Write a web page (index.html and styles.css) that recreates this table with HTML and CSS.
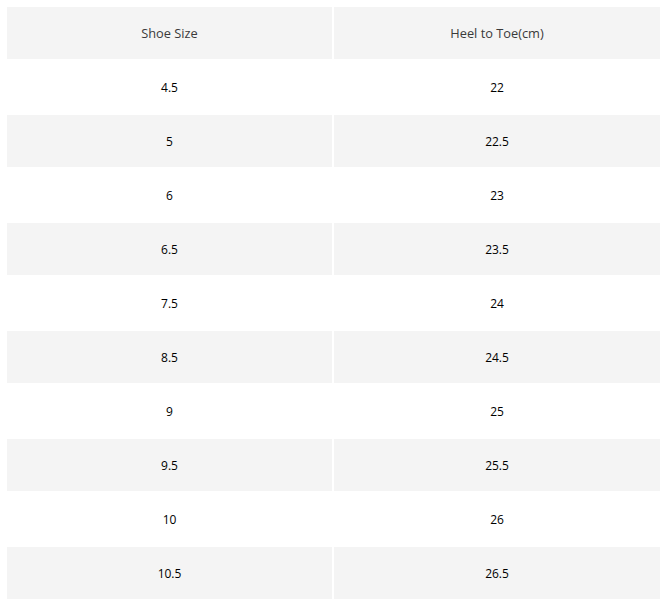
FILE: index.html
```html
<!DOCTYPE html>
<html>
<head>
<meta charset="utf-8">
<link rel="stylesheet" href="styles.css">
</head>
<body>
<div class="size-table">
  <div class="cell head">Shoe Size</div><div class="cell head">Heel to Toe(cm)</div>
  <div class="cell">4.5</div><div class="cell">22</div>
  <div class="cell alt">5</div><div class="cell alt">22.5</div>
  <div class="cell">6</div><div class="cell">23</div>
  <div class="cell alt">6.5</div><div class="cell alt">23.5</div>
  <div class="cell">7.5</div><div class="cell">24</div>
  <div class="cell alt">8.5</div><div class="cell alt">24.5</div>
  <div class="cell">9</div><div class="cell">25</div>
  <div class="cell alt">9.5</div><div class="cell alt">25.5</div>
  <div class="cell">10</div><div class="cell">26</div>
  <div class="cell alt">10.5</div><div class="cell alt">26.5</div>
</div>
</body>
</html>
```
FILE: styles.css
```css
html, body {
  margin: 0;
  padding: 0;
  background: #ffffff;
  overflow: hidden;
}
.size-table {
  display: grid;
  grid-template-columns: 325px 326px;
  grid-auto-rows: 52px;
  gap: 2px;
  padding: 7px 0 0 7px;
  font-family: "Open Sans", "Noto Sans", sans-serif;
  font-size: 12px;
  color: #000000;
}
.cell {
  display: flex;
  align-items: center;
  justify-content: center;
  background: #ffffff;
}
.cell.head {
  background: #f4f4f4;
  color: #3a3a3a;
  font-size: 12.8px;
}
.cell.alt {
  background: #f4f4f4;
}
```
